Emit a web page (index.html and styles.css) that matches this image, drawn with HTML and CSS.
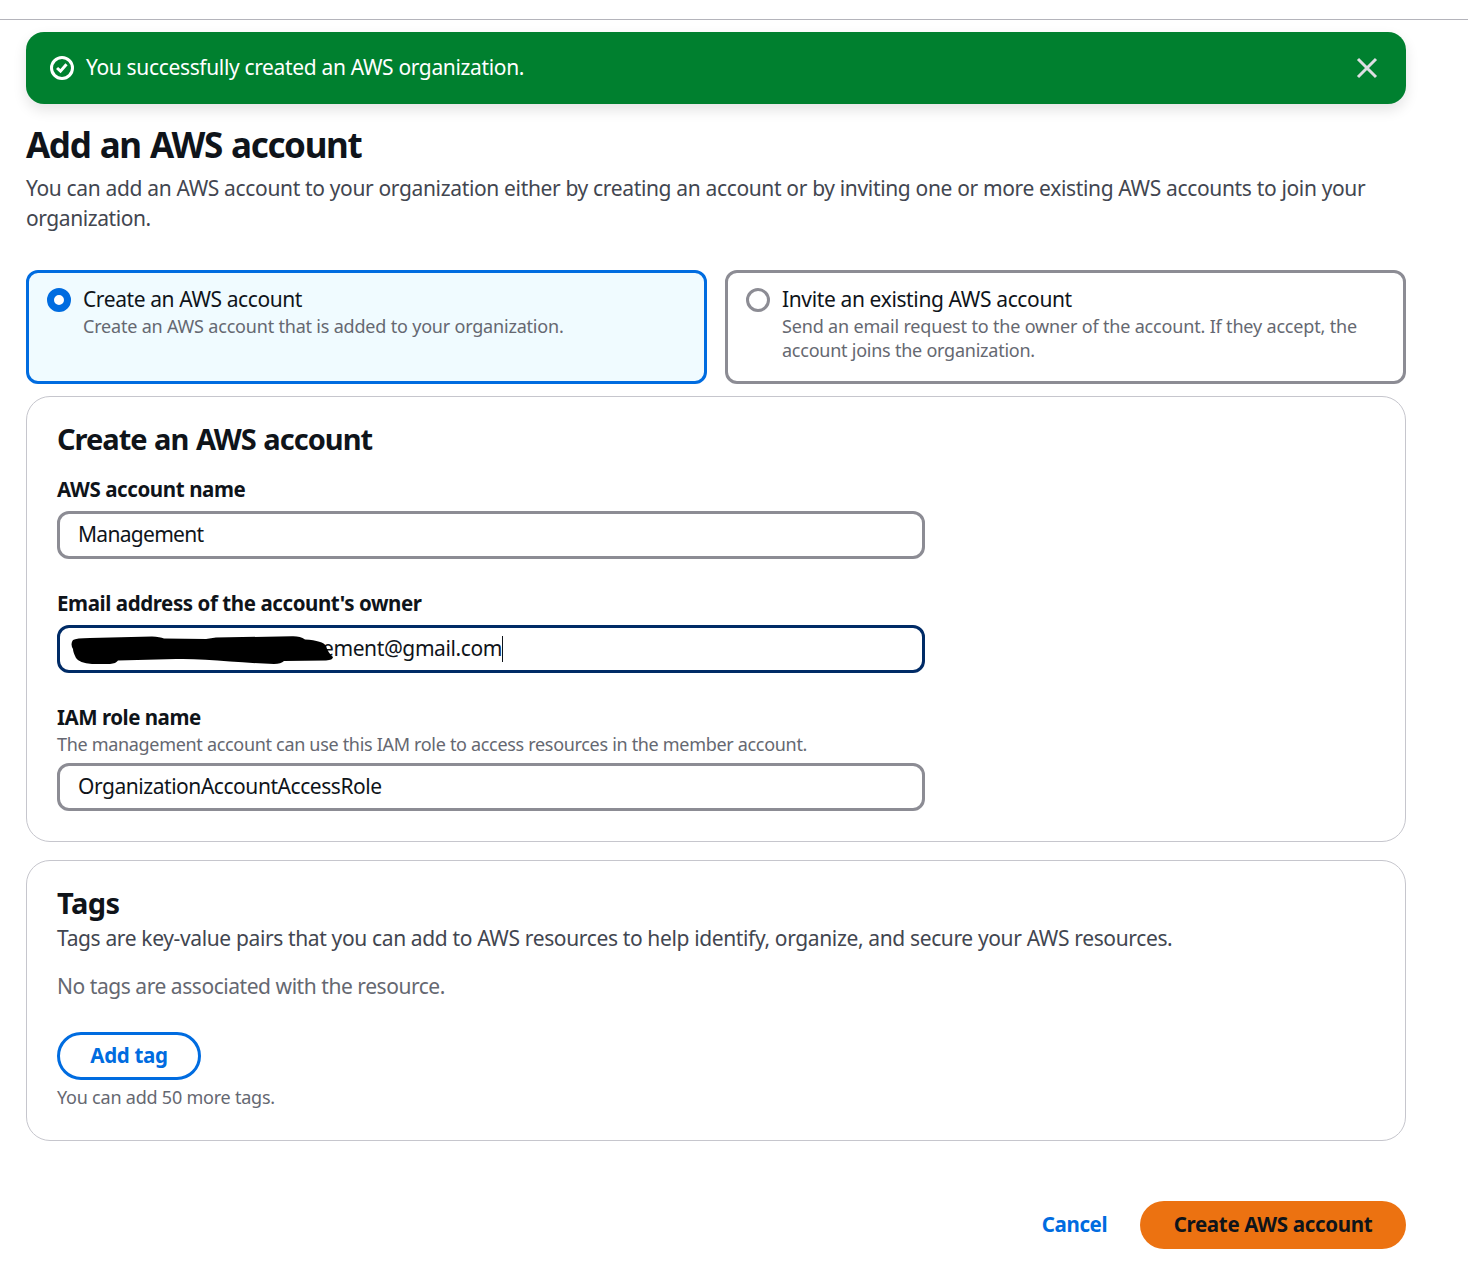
FILE: index.html
```html
<!DOCTYPE html>
<html lang="en">
<head>
<meta charset="utf-8">
<title>Add an AWS account</title>
<link rel="stylesheet" href="styles.css">
</head>
<body>
<div class="topbar"></div>
<main class="page">
  <div class="flash">
    <svg class="flash-icon" width="24" height="24" viewBox="0 0 16 16" fill="none" stroke="#fff" stroke-width="2"><circle cx="8" cy="8" r="7"/><path d="M4.700 8 7 10.100 11 5.500"/></svg>
    <span class="flash-text"><span class="t t-flash">You successfully created an AWS organization.</span></span>
    <svg class="flash-close" width="24" height="24" viewBox="0 0 24 24" fill="none" stroke="#dedee3" stroke-width="3"><path d="m3 3 18 18M21 3 3 21"/></svg>
  </div>

  <h1><span class="t t-h1">Add an AWS account</span></h1>
  <p class="lead"><span class="t t-lead">You can add an AWS account to your organization either by creating an account or by inviting one or more existing AWS accounts to join your</span><br><span class="t t-lead2">organization.</span></p>

  <div class="tiles">
    <label class="tile tile-selected">
      <span class="radio radio-on"></span>
      <span class="tile-body"><span class="tile-title"><span class="t t-tile1">Create an AWS account</span></span><span class="hint"><span class="t t-hint1">Create an AWS account that is added to your organization.</span></span></span>
    </label>
    <label class="tile">
      <span class="radio"></span>
      <span class="tile-body"><span class="tile-title"><span class="t t-tile2">Invite an existing AWS account</span></span><span class="hint"><span class="t t-hint2">Send an email request to the owner of the account. If they accept, the</span><br><span class="t t-hint3">account joins the organization.</span></span></span>
    </label>
  </div>

  <section class="card">
    <h2><span class="t t-h2">Create an AWS account</span></h2>
    <div class="field">
      <div class="label"><span class="t t-label1">AWS account name</span></div>
      <div class="input"><span class="t t-in1">Management</span></div>
    </div>
    <div class="field">
      <div class="label"><span class="t t-label2">Email address of the account's owner</span></div>
      <div class="input input-focus"><span class="email t t-email">ement@gmail.com</span><span class="caret"></span>
        <svg class="scribble" width="264" height="30" viewBox="0 0 264 30"><path d="M3 4 Q6 2 20 2 L82 0.5 Q90 1 94 2.5 L136 3 L146 1.5 L222 0.3 Q230 0 235 3.500 Q253 4.500 256 10 Q258 17 263 21 Q263 24 256 24.500 L214 25 Q211 28 204 28 Q180 27 160 25.500 Q130 22.500 106 23 L48 24.500 Q46 27.500 40 28 L22 28 Q9 27 6 22 Q3 16 3 13 Q0 8 3 4Z"/></svg>
      </div>
    </div>
    <div class="field">
      <div class="label"><span class="t t-label3">IAM role name</span></div>
      <div class="hint"><span class="t t-hint4">The management account can use this IAM role to access resources in the member account.</span></div>
      <div class="input"><span class="t t-in2">OrganizationAccountAccessRole</span></div>
    </div>
  </section>

  <section class="card card-tags">
    <h2><span class="t t-tags">Tags</span></h2>
    <p class="tags-lead"><span class="t t-tagslead">Tags are key-value pairs that you can add to AWS resources to help identify, organize, and secure your AWS resources.</span></p>
    <p class="tags-empty"><span class="t t-empty">No tags are associated with the resource.</span></p>
    <button class="btn btn-outline"><span class="t t-add">Add tag</span></button>
    <div class="hint tags-hint"><span class="t t-hint5">You can add 50 more tags.</span></div>
  </section>

  <div class="actions">
    <button class="btn btn-link"><span class="t t-cancel">Cancel</span></button>
    <button class="btn btn-primary"><span class="t t-create">Create AWS account</span></button>
  </div>
</main>
</body>
</html>
```
FILE: styles.css
```css
* { box-sizing: border-box; }
body { margin: 0; background: #fff; color: #0f141a; font: 21px/30px "Noto Sans", sans-serif; }
h1, h2, p { margin: 0; }
.topbar { height: 20px; border-bottom: 1px solid #b4b4bb; }
.page { width: 1380px; margin: 12px 0 0 26px; }
.flash { display: flex; align-items: center; height: 72px; padding: 0 27px 0 24px; border-radius: 18px; background: #00802f; color: #fff; box-shadow: 0 6px 14px 0 rgba(0, 7, 22, .11); }
.flash-text { flex: 1; margin-left: 12px; }
h1 { margin-top: 20px; font-size: 35px; line-height: 45px; }
.lead { margin-top: 5px; color: #424650; }
.tiles { display: grid; grid-template-columns: 1fr 1fr; gap: 18px; margin-top: 36px; }
.tile { display: flex; gap: 12px; height: 114px; padding: 12px 18px; border: 3px solid #8c8c94; border-radius: 12px; }
.tile-selected { border-color: #006ce0; background: #f0fbff; }
.radio { flex: none; width: 24px; height: 24px; margin-top: 3px; border: 3px solid #8c8c94; border-radius: 50%; background: #fff; }
.radio-on { border: 7px solid #006ce0; }
.tile-title { display: block; }
.hint { display: block; font-size: 18px; line-height: 24px; color: #656871; }
.card { height: 446px; margin-top: 12px; padding: 25px 30px 0; border: 1px solid #c6c6cd; border-radius: 24px; }
h2 { font-size: 29px; line-height: 36px; }
.field { margin-bottom: 30px; }
h2 + .field { margin-top: 17px; }
.label { font-size: 20.5px; font-weight: 700; }
.input { position: relative; display: flex; align-items: center; width: 868px; height: 48px; margin-top: 6px; padding: 0 18px; border: 3px solid #8c8c94; border-radius: 12px; }
.input-focus { border-color: #002b66; }
.email { margin-left: 244px; }
.caret { width: 1px; height: 26px; background: #0f141a; }
.scribble { position: absolute; left: 10px; top: 8px; }
.card-tags { height: 281px; margin-top: 18px; }
.tags-lead { margin-top: 2px; color: #424650; }
.tags-empty { margin-top: 18px; color: #656871; }
.btn { display: flex; align-items: center; justify-content: center; height: 48px; padding: 0; border: 0; border-radius: 24px; background: none; font: 700 20.5px/30px "Noto Sans", sans-serif; color: #0f141a; }
.btn-outline { width: 144px; margin-top: 30px; border: 3px solid #006ce0; color: #006ce0; }
.tags-hint { margin-top: 6px; }
.actions { display: flex; justify-content: flex-end; margin-top: 60px; }
.btn-link { width: 131px; color: #006ce0; }
.btn-primary { width: 266px; background: #ec7211; }

/* Text runs: optical alignment and tracking */
.t { display: inline-block; vertical-align: top; white-space: nowrap; transform: translateY(-1px); }
.t-flash, .t-lead { letter-spacing: -.345px; }
.t-h1 { letter-spacing: -1.35px; word-spacing: 1.5px; transform: translateY(-2px); }
.t-lead2 { letter-spacing: -.42px; }
.t-tile1 { letter-spacing: -.405px; }
.t-tile2 { letter-spacing: -.37px; }
.t-hint1 { letter-spacing: -.195px; }
.t-hint2 { letter-spacing: -.175px; }
.t-hint3 { letter-spacing: -.24px; }
.t-h2 { letter-spacing: -1px; word-spacing: 1px; }
.t-label1 { letter-spacing: -.4px; }
.t-label2 { letter-spacing: -.42px; }
.t-label3 { letter-spacing: -.48px; }
.t-in1 { letter-spacing: -.7px; }
.t-email { letter-spacing: -.4px; }
.t-in2 { letter-spacing: -.45px; }
.t-hint4 { letter-spacing: -.315px; }
.t-tags { letter-spacing: -.5px; }
.t-tagslead { letter-spacing: -.363px; }
.t-empty { letter-spacing: -.45px; }
.t-add { letter-spacing: -.3px; }
.t-hint5 { letter-spacing: -.22px; }
.t-cancel { letter-spacing: -.4px; }
.t-create { letter-spacing: -.33px; }
```
